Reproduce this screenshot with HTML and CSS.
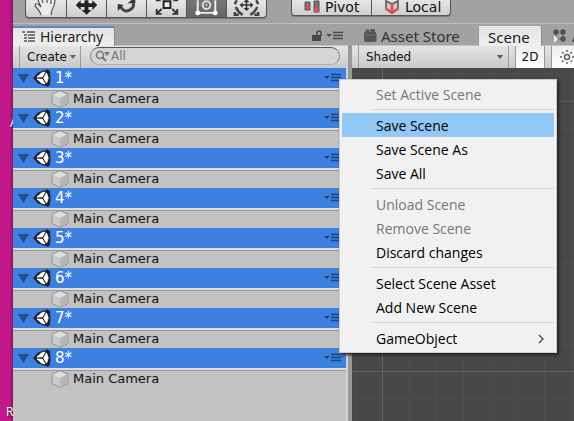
FILE: index.html
```html
<!DOCTYPE html>
<html lang="en">
<head>
<meta charset="utf-8">
<title>Scene editor</title>
<link rel="stylesheet" href="styles.css">
</head>
<body>
<svg class="defs" aria-hidden="true">
  <symbol id="unity" viewBox="0 0 18 18">
    <path d="M0 9 5 3.500 14 .5Q16.500 0 17 3L17.500 9 17 15Q16.500 18 14 17.500L5 14.500Z" fill="#20242a"/>
    <path d="M4 8 8.500 4 12 3 9.300 7.700ZM4 10 8.500 14 12 15 9.300 10.300ZM13.500 4 15.200 9 13.500 14 10.700 9Z" fill="#fff" stroke="#fff" stroke-width=".9"/>
  </symbol>
  <symbol id="cube" viewBox="0 0 18 18">
    <path d="M9 .8 17 4V13.500L9 17.300 1 13.500V4Z" fill="#ccc" stroke="#939393"/>
    <path d="M9 1.500 15.700 4.500 9 8 2.300 4.500Z" fill="#dedede"/>
    <path d="M9 8 16 4.500V13L9 16.700Z" fill="#b7b7b7"/>
  </symbol>
  <symbol id="options" viewBox="0 0 18 10">
    <path d="M0 3H6L3 6Z"/><path d="M7 1.500H17M7 4.500H17M7 7.500H17" stroke="currentColor" stroke-width="1.500"/>
  </symbol>
</svg>
<div class="desktop">
  <div class="wallpaper" aria-hidden="true"><span>A</span><span>R</span></div>
  <div class="editor">
    <header class="toolbar">
      <div class="group tools">
        <button aria-label="Hand"><svg viewBox="0 0 40 17"><path d="M15 15Q14 11 9 6 9 3 12 4L14 6 11 0H29Q29 5 25 15Z" fill="#ececec"/><path d="M15 15Q14 11 9 6 9 3 12 4L15 7 12 0M17 3 16 0M21 3V0M25 4V0M29 0Q29 5 26 10L25 15" fill="none" stroke="#555" stroke-width="1.200"/></svg></button>
        <button aria-label="Move"><svg viewBox="0 0 40 17"><path d="M18 0H22V3H26V0L31 5 26 10V7H22V10H25L20 15 15 10H18V7H14V10L9 5 14 0V3H18Z" fill="#222"/></svg></button>
        <button aria-label="Rotate"><svg viewBox="0 0 40 17"><path d="M14 7Q19 14 25 9 28 6 27 3" fill="none" stroke="#444" stroke-width="3"/><path d="M11 4V11L17 5ZM21 3H29V-3Z" fill="#333"/></svg></button>
        <button aria-label="Scale"><svg viewBox="0 0 40 17"><path d="M17 1H24V8H17Z" fill="#eee" stroke="#222" stroke-width="2"/><path d="M15 9 11 13M26 9 30 13M10 9V14H15M31 9V14H26M10 1V0H14M27 0H31V1" fill="none" stroke="#333" stroke-width="2"/></svg></button>
        <button class="active" aria-label="Rect" aria-pressed="true"><svg viewBox="0 0 40 17"><path d="M11 0V13H29V0" fill="none" stroke="#eee" stroke-width="2"/><circle cx="20" cy="5" r="4" fill="none" stroke="#ddd" stroke-width="2"/><circle cx="20" cy="5" r="1" fill="#ddd"/><circle cx="11" cy="13" r="2.500" fill="#fff"/><circle cx="29" cy="13" r="2.500" fill="#fff"/></svg></button>
        <button aria-label="Transform"><svg viewBox="0 0 40 17"><path d="M20 0V10M14 5H26" stroke="#333" stroke-width="1.500"/><path d="M17 8H23L20 11ZM16 2V8L13 5ZM24 2V8L27 5ZM17 2H23L20-1Z" fill="#333"/><path d="M9 7Q11 12 16 15M31 7Q29 12 24 15M8 12V15H12M32 12V15H28M10 0 8 4M30 0 32 4" fill="none" stroke="#444" stroke-width="2.500"/></svg></button>
      </div>
      <div class="group modes">
        <button><svg viewBox="0 0 16 15"><path d="M1 2H6V10H1ZM10 1H15V12H10Z" fill="#777" stroke="#555"/><circle cx="3.500" cy="7" r="2" fill="#f0494f"/><circle cx="12.500" cy="10" r="2.300" fill="#f0494f"/></svg>Pivot</button>
        <button><svg viewBox="0 0 16 15"><path d="M2 1 8 4 14 1V9L8 13 2 9Z" fill="#ccc" stroke="#555" stroke-width="1.500"/><path d="M8 4V12M2 9 8 12 14 9" fill="none" stroke="#e84b50" stroke-width="2.500"/></svg>Local</button>
      </div>
    </header>
    <main class="panes">
      <section class="pane hierarchy">
        <div class="tabs">
          <button class="tab selected"><svg class="list-icon" viewBox="0 0 14 12"><path d="M0 1H3M2 4H5M2 7H5M2 10H5M5 1H13M6 4H13M6 7H13M6 10H13" stroke="#555" stroke-width="1.300"/></svg>Hierarchy</button>
          <span class="tab-actions"><svg class="lock" viewBox="0 0 10 12"><path d="M5 6V3Q5 1 7 1T9 3V6" fill="none" stroke="#484848" stroke-width="1.500"/><path d="M0 5H9V11H0Z" fill="#484848"/></svg><svg class="options"><use href="#options"/></svg></span>
        </div>
        <div class="bar">
          <button class="create">Create<svg viewBox="0 0 6 4"><path d="M0 0H6L3 4Z" fill="#666"/></svg></button>
          <label class="search"><svg viewBox="0 0 16 12"><circle cx="5" cy="5" r="3.500" fill="none" stroke="#777" stroke-width="1.500"/><path d="M7 7 11 11" stroke="#777" stroke-width="2"/><path d="M9 2H15L12 6Z" fill="#777"/></svg><input type="search" aria-label="Search hierarchy" placeholder="All"></label>
        </div>
        <ul class="tree" id="tree"></ul>
      </section>
      <section class="pane scene">
        <div class="tabs">
          <button class="tab store"><svg class="bag" viewBox="0 0 13 13"><path d="M0 4 11 3 12 5V12L1 13ZM2 4V1H5V4M7 3V0H10V3" fill="#555" stroke="#555"/><path d="M1 6H11" stroke="#777"/></svg>Asset Store</button>
          <button class="tab selected scene-tab">Scene</button>
          <button class="tab animator"><svg viewBox="0 0 14 14"><path d="M3 3H10V10H3Z" fill="none" stroke="#666"/><circle cx="3" cy="3" r="2.700" fill="#505050"/><circle cx="10" cy="3" r="2.700" fill="#505050"/><circle cx="10" cy="10" r="2.700" fill="#505050"/><path d="M1 6 5 10 1 14Z" fill="#eee"/></svg>A</button>
        </div>
        <div class="bar">
          <span class="shading"><select aria-label="Draw mode"><option>Shaded</option></select><svg viewBox="0 0 6 4"><path d="M0 0H6L3 4Z" fill="#555"/></svg></span>
          <button class="toggle">2D</button>
          <button class="toggle light" aria-label="Lighting"><svg viewBox="0 0 14 14"><circle cx="7" cy="7" r="2.500" fill="none" stroke="#666" stroke-width="1.500"/><path d="M7 0V2M7 12V14M0 7H2M12 7H14M2 2 3.500 3.500M10.500 10.500 12 12M12 2 10.500 3.500M2 12 3.500 10.500" stroke="#666" stroke-width="1.500"/></svg></button>
        </div>
        <div class="viewport"></div>
      </section>
    </main>
  </div>
  <div class="menu" role="menu">
    <button role="menuitem" disabled>Set Active Scene</button>
    <hr>
    <button role="menuitem" class="hover">Save Scene</button>
    <button role="menuitem">Save Scene As</button>
    <button role="menuitem">Save All</button>
    <hr>
    <button role="menuitem" disabled>Unload Scene</button>
    <button role="menuitem" disabled>Remove Scene</button>
    <button role="menuitem">Discard changes</button>
    <hr>
    <button role="menuitem">Select Scene Asset</button>
    <button role="menuitem">Add New Scene</button>
    <hr>
    <button role="menuitem" aria-haspopup="menu">GameObject<svg viewBox="0 0 6 10"><path d="M1 1 5 5 1 9" fill="none" stroke="#444" stroke-width="1.300"/></svg></button>
  </div>
</div>
<script src="tree.js"></script>
</body>
</html>
```
FILE: styles.css
```css
* { box-sizing: border-box; }
body { margin: 0; font-family: "DejaVu Sans", sans-serif; font-size: 13px; color: #111; overflow: hidden; }
button, input, select { font: inherit; color: inherit; margin: 0; padding: 0; border: 0; background: none; border-radius: 0; }
svg { display: block; flex: none; overflow: hidden; }
.defs { position: absolute; width: 0; height: 0; }
.desktop { display: grid; grid-template-columns: 13px minmax(0, 1fr); height: 100vh; position: relative; overflow: hidden; background: #a2a2a2; }
.wallpaper { background: linear-gradient(90deg, #c2188a 70%, #8f1267); overflow: hidden; display: flex; flex-direction: column; justify-content: space-between; padding: 114px 0 0 6px; color: #fff; font: 12px/18px "Open Sans", sans-serif; text-shadow: 1px 1px 1px #222; }
.wallpaper span:first-child { padding-left: 4px; }
.editor { display: flex; flex-direction: column; min-width: 0; }
.toolbar { height: 24px; flex: none; display: flex; align-items: flex-start; gap: 25px; padding-left: 12px; border-bottom: 1px solid #c0c0c0; }
.group { display: flex; border: 1px solid #555; border-top: 0; border-radius: 0 0 4px 4px; overflow: hidden; background: linear-gradient(#e6e6e6, #cfcfcf); box-shadow: 0 1px 1px #777; }
.group button + button { border-left: 1px solid #555; }
.tools button { width: 40px; height: 17px; }
.tools .active { background: linear-gradient(#777, #656565); }
.tools svg { width: 100%; height: 17px; }
.modes { margin-left: -1px; }
.modes button { height: 15px; width: 79px; display: flex; align-items: center; gap: 5px; padding: 0 0 0 12px; font-size: 14px; line-height: 15px; }
.modes svg { width: 16px; height: 15px; }
.panes { display: grid; grid-template-columns: 335px minmax(0, 1fr); column-gap: 4px; flex: 1; min-height: 0; background: linear-gradient(#a2a2a2 22px, #999 22px); }
.pane { display: flex; flex-direction: column; min-width: 0; min-height: 0; overflow: hidden; }
.tabs { height: 22px; padding-top: 2px; flex: none; display: flex; justify-content: space-between; border-bottom: 1px solid #c5c5c5; }
.tab { display: flex; flex: none; align-items: center; font: 15px/18px "Noto Sans", sans-serif; white-space: nowrap; color: #333; }
.tab.selected { background: linear-gradient(#e4e4e4, #eee); border-top: 1px solid #eee; border-right: 1px solid #888; border-radius: 0 3px 0 0; color: #222; height: 20px; }
.hierarchy .selected { padding: 0 11px 0 9px; gap: 4px; border-top: 2px solid #5b87c7; font-size: 14px; }
.list-icon { width: 14px; height: 12px; }
.tab-actions { display: flex; align-items: center; gap: 4px; color: #484848; padding-right: 4px; }
.lock { width: 10px; height: 12px; }
.options { width: 18px; height: 10px; fill: currentColor; }
.bar { height: 22px; flex: none; display: flex; background: linear-gradient(#e4e4e4, #c9c9c9); padding-left: 6px; }
.create { width: 62px; border: solid #999; border-width: 0 1px; padding: 0 4px 0 7px; display: flex; align-items: center; justify-content: space-between; font-size: 12px; }
.create svg, .shading svg { width: 6px; height: 4px; }
.search { flex: 1; height: 18px; margin: 1px 8px 0 9px; border: 1px solid #888; border-top-color: #555; border-bottom-color: #aaa; border-radius: 9px; background: #d5d5d5; display: flex; align-items: center; padding-left: 4px; }
.search svg { width: 16px; height: 12px; }
.search input { flex: 1; min-width: 0; height: 16px; outline: 0; font-size: 12px; appearance: none; }
.search input::placeholder { color: #777; opacity: 1; }
.tree { list-style: none; margin: 0; padding: 0; background: #c2c2c2; flex: 1; border-right: 2px solid #d2d2d2; }
.root { height: 20px; display: flex; align-items: center; background: #3d80df; color: #fff; padding-left: 5px; }
.fold { width: 11px; height: 20px; display: flex; align-items: center; }
.fold svg { width: 11px; height: 10px; }
.unity { width: 18px; height: 18px; margin: 0 4px; }
.root .name { flex: 1; font-size: 15px; }
.root .options { color: #1c4176; margin-right: 4px; }
.child { height: 20px; display: flex; align-items: center; gap: 4px; padding-left: 38px; border-top: 2px solid #ddd; box-shadow: inset 0 1px #999; }
.child svg { width: 18px; height: 18px; }
.child span { padding-bottom: 1px; }
.scene .tabs { justify-content: flex-start; padding-left: 12px; }
.store { gap: 4px; width: 114px; }
.bag { width: 13px; height: 13px; }
.scene-tab { width: 64px; padding-left: 9px; border-left: 1px solid #999; border-radius: 3px 3px 0 0; }
.animator { padding-left: 11px; gap: 5px; }
.animator svg { width: 14px; height: 14px; }
.shading { flex: none; width: 151px; border: solid #999; border-width: 0 1px; display: flex; align-items: center; padding-right: 5px; }
.shading select { flex: 1; min-width: 0; height: 22px; appearance: none; padding-left: 7px; font-size: 12px; }
.toggle { width: 30px; margin-left: 6px; background: linear-gradient(#eee, #fff); border: solid #999; border-width: 0 1px; font-size: 12px; display: grid; place-items: center; flex: none; }
.light { width: 32px; }
.light svg { width: 14px; height: 14px; }
.viewport { flex: 1; background-color: #484848; background-image: linear-gradient(#5e5e5e 1px, transparent 1px), linear-gradient(90deg, #666 1px, transparent 1px), linear-gradient(#4e4e4e 1px, transparent 1px), linear-gradient(90deg, #4e4e4e 1px, transparent 1px); background-size: 270px 270px, 270px 270px, 27px 27px, 27px 27px; background-position: 30px 33px, 30px 33px, 3px 6px, 3px 6px; }
.menu { position: absolute; left: 339px; top: 79px; width: 218px; padding: 2px; border: 1px solid #ccc; background: #f1f1f1; box-shadow: 2px 2px 3px #222; display: flex; flex-direction: column; font: 14px/22px "Open Sans", sans-serif; color: #000; }
.menu button { height: 24px; display: flex; align-items: center; justify-content: space-between; padding: 2px 10px 0 34px; text-align: left; }
.menu button:disabled { color: #777; }
.menu .hover { background: #91c8f6; }
.menu hr { width: auto; height: 1px; border: 0; background: #d5d5d5; margin: 3px 0 3px 30px; }
.menu svg { width: 6px; height: 10px; }
```
FILE: tree.js
```js
const tree = document.getElementById("tree");
for (let n = 1; n <= 8; n++) {
  tree.insertAdjacentHTML("beforeend", `
    <li>
      <div class="root">
        <button class="fold" aria-label="Collapse scene ${n}"><svg viewBox="0 0 11 10"><path d="M0 1H11L5.500 10Z" fill="#21508f"/></svg></button>
        <svg class="unity"><use href="#unity"/></svg>
        <span class="name">${n}*</span>
        <svg class="options"><use href="#options"/></svg>
      </div>
      <div class="child"><svg><use href="#cube"/></svg><span>Main Camera</span></div>
    </li>`);
}
```
